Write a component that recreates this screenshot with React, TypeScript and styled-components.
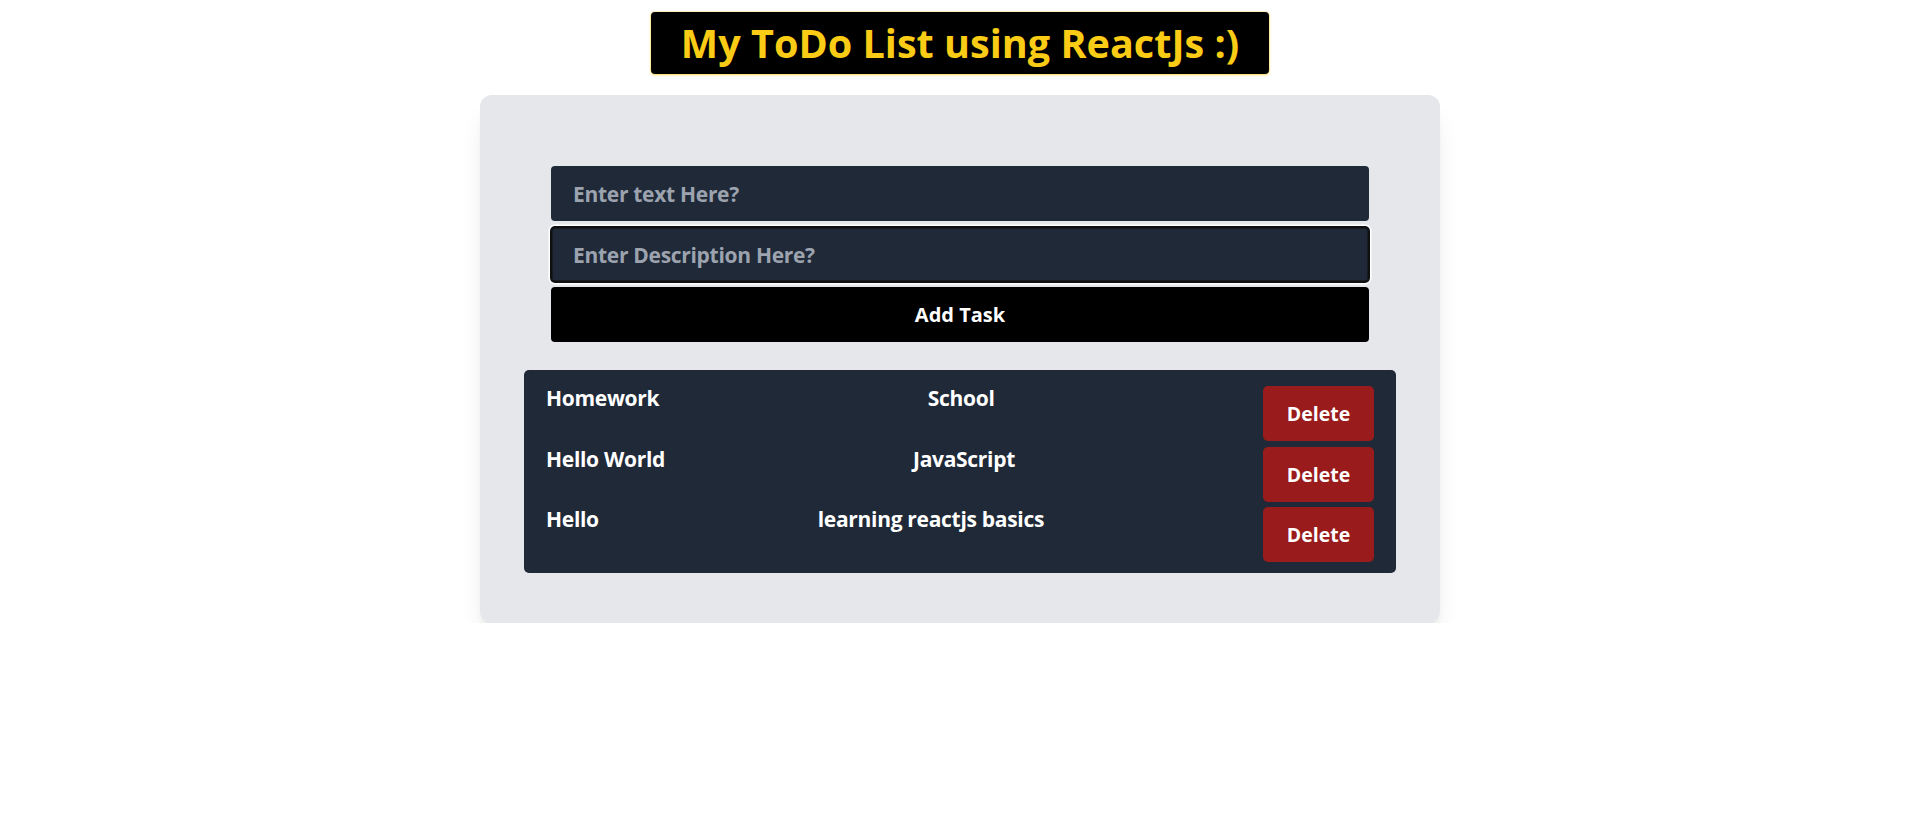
import React from "react";
import styled, { createGlobalStyle } from "styled-components";

const GlobalStyle = createGlobalStyle`
  html, body {
    margin: 0;
    padding: 0;
    background: #ffffff;
    font-family: "Open Sans", "Noto Sans", sans-serif;
  }
  * { box-sizing: border-box; }
`;

const Page = styled.div`
  display: flex;
  flex-direction: column;
  align-items: center;
  padding-top: 12px;
`;

const Title = styled.h1`
  margin: 0;
  height: 62px;
  padding: 8px 30px 0;
  background: #000000;
  color: #facc15;
  font-size: 39.6px;
  line-height: 47px;
  font-weight: 700;
  border-radius: 4px;
  box-shadow: 0 1px 3px rgba(250, 204, 21, 0.6), 0 0 0 1px rgba(250, 204, 21, 0.25);
  white-space: nowrap;
`;

const Card = styled.main`
  margin-top: 21px;
  width: 960px;
  background: #e5e7eb;
  border-radius: 12px;
  box-shadow: 0 20px 25px -5px rgba(0, 0, 0, 0.1), 0 8px 10px -6px rgba(0, 0, 0, 0.1);
  padding: 71px 44px 50px;
  display: flex;
  flex-direction: column;
`;

const Form = styled.form`
  display: flex;
  flex-direction: column;
  gap: 5px;
  padding: 0 27px;
`;

const Field = styled.input<{ $focused?: boolean }>`
  height: 55px;
  width: 100%;
  border: none;
  border-radius: 4px;
  background: #1f2937;
  color: #ffffff;
  padding: 0 22px;
  font-family: inherit;
  font-size: 21px;
  letter-spacing: -0.3px;
  font-weight: 700;
  outline: none;
  box-shadow: ${(p) =>
    p.$focused ? "inset 0 0 0 1.5px #101010, 0 0 0 1px #101010, 0 0 0 2.5px #ffffff" : "none"};
  margin-top: ${(p) => (p.$focused ? "1px" : "0")};
  &::placeholder {
    color: #9ca3af;
    opacity: 1;
  }
`;

const AddButton = styled.button`
  height: 55px;
  width: 100%;
  border: none;
  border-radius: 4px;
  background: #000000;
  color: #ffffff;
  font-family: inherit;
  font-size: 20px;
  font-weight: 700;
  cursor: pointer;
`;

const List = styled.ul`
  list-style: none;
  margin: 28px 0 0;
  padding: 16px 22px 11px;
  background: #1f2937;
  border-radius: 5px;
  display: flex;
  flex-direction: column;
  gap: 5.5px;
`;

const Row = styled.li`
  display: flex;
  justify-content: space-between;
  align-items: flex-start;
  height: 55px;
`;

const Cell = styled.span`
  color: #ffffff;
  font-size: 21px;
  letter-spacing: -0.3px;
  font-weight: 700;
  line-height: 22px;
  margin-top: 1px;
  white-space: nowrap;
`;

const DeleteButton = styled.button`
  width: 111px;
  height: 55px;
  border: none;
  border-radius: 5px;
  background: #991b1b;
  color: #ffffff;
  font-family: inherit;
  font-size: 19.5px;
  font-weight: 700;
  cursor: pointer;
`;

const tasks = [
  { title: "Homework", desc: "School" },
  { title: "Hello World", desc: "JavaScript" },
  { title: "Hello", desc: "learning reactjs basics" },
];

export default function App() {
  return (
    <>
      <GlobalStyle />
      <Page>
        <Title>My ToDo List using ReactJs :)</Title>
        <Card>
          <Form onSubmit={(e) => e.preventDefault()}>
            <Field placeholder="Enter text Here?" />
            <Field placeholder="Enter Description Here?" $focused />
            <AddButton type="submit">Add Task</AddButton>
          </Form>
          <List>
            {tasks.map((t) => (
              <Row key={t.title}>
                <Cell>{t.title}</Cell>
                <Cell>{t.desc}</Cell>
                <DeleteButton>Delete</DeleteButton>
              </Row>
            ))}
          </List>
        </Card>
      </Page>
    </>
  );
}
